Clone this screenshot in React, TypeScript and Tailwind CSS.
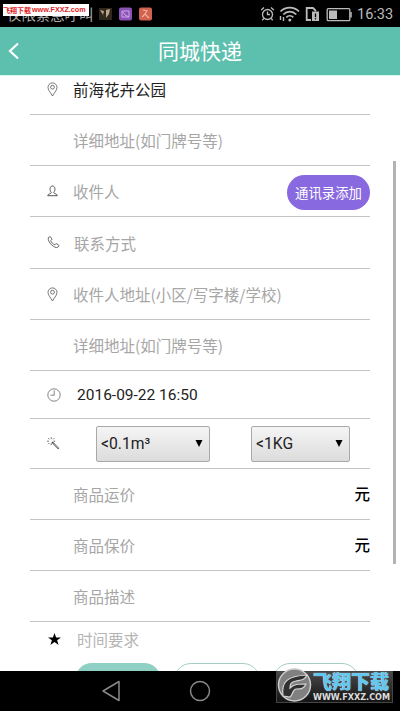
import React from 'react';

const PinIcon = () => (
  <svg width="11" height="15" viewBox="0 0 11 15" fill="none" stroke="#555" strokeWidth="0.8">
    <path d="M5.5 14C4.3 11.3 1 8.6 1 5.4a4.5 4.5 0 0 1 9 0C10 8.6 6.7 11.3 5.5 14Z" />
    <circle cx="5.5" cy="5.2" r="1.9" />
  </svg>
);

const PersonIcon = () => (
  <svg width="11" height="12" viewBox="0 0 11 12" fill="none" stroke="#444" strokeWidth="0.9">
    <path d="M4.3 7.4C2.3 5.4 2.7 1 5.5 1s3.200 4.400 1.200 6.400c0 1.500 3.400 1.200 3.600 3.300H.7c.2-2.100 3.600-1.800 3.600-3.300Z" />
  </svg>
);

const PhoneIcon = () => (
  <svg width="13" height="13" viewBox="0 0 13 13" fill="none" stroke="#555" strokeWidth="0.9">
    <path d="M1.300 1.600 2.500.8c.5-.3.9-.2 1.200.3l1 1.700c.3.5.1.9-.3 1.200l-.7.6c.5 1.700 2.400 3.600 4.100 4.200l.7-.8c.3-.4.700-.5 1.200-.2l1.800 1.100c.5.300.5.700.2 1.100l-1 1.300C7.800 12.800.4 6.500 1.300 1.600Z" />
  </svg>
);

const ClockIcon = () => (
  <svg width="14" height="14" viewBox="0 0 14 14" fill="none" stroke="#666" strokeWidth="0.8">
    <circle cx="7" cy="7" r="6.200" />
    <path d="M7.200 2.500v4.700H3.500" />
  </svg>
);

const WandIcon = () => (
  <svg width="13" height="13" viewBox="0 0 13 13" fill="none" stroke="#444">
    <path d="m5 5 6.700 6.700" strokeWidth="1.600" />
    <path d="m6.500 6.500 4.700 4.700" stroke="#ddd" strokeWidth="0.600" />
    <path d="M4.200.3v1.600M.2 4.200h1.600M1.300 1.300l1 1M7.100 1.300l-1 1M1.300 7.100l1-1M4.200 6.400V8M6.600 4.200h1.500" strokeWidth="0.900" />
  </svg>
);

const StatusIcons = () => (
  <svg width="93" height="18" viewBox="0 0 93 18" fill="none" stroke="#bbb" strokeWidth="1.300">
    {/* alarm */}
    <circle cx="7.500" cy="9.500" r="5" />
    <path d="M7.500 6.500v3H10M1.200 5 4 2.500M13.800 5 11 2.500M3.800 13.500l-1.500 1.700M11.200 13.500l1.500 1.700" />
    {/* wifi */}
    <path d="M20.500 6.500a13 13 0 0 1 18.500 0M23.300 9.500a9 9 0 0 1 13 0M26.300 12.400a5 5 0 0 1 7 0" strokeWidth="1.700" />
    <circle cx="29.800" cy="15" r="1.500" fill="#bbb" stroke="none" />
    <path d="M20.500 11v4M23.500 12v4" strokeWidth="1.400" />
    {/* sim card */}
    <path d="M51 15h-4.300V3H53l3 3" strokeWidth="1.800" />
    <path d="M52 6.500h7v9.500h-7z" fill="#bbb" stroke="none" />
    <path d="M55.500 8.500v3.700M55.500 13.200v1.300" stroke="#000" />
    {/* battery */}
    <rect x="67.200" y="3.700" width="22.600" height="12" rx="1" />
    <path d="M69 5.500h8v8.500h-8z" fill="#bbb" stroke="none" />
    <path d="M91 7v5.500" strokeWidth="1.500" />
  </svg>
);

const StatusBar = () => (
  <div className="relative h-[27px] bg-black flex items-center pl-[7px] pr-[7px] shrink-0">
    <span className="w-[86px] text-[14.400px] leading-[27px] text-[#aaa] whitespace-nowrap">仅限紧急呼叫</span>
    <svg className="ml-[5px]" width="54" height="14" viewBox="0 0 54 14">
      <rect x="1" y="1" width="13" height="12" fill="#30271d" />
      <path d="m2 3 4 1-1 4 2 3M8 3l4-1-1 5-3 4" fill="#b9a58b" />
      <rect x="21" y="0.500" width="13" height="13" rx="2" fill="#8b52b7" />
      <path d="M24 4h7v6h-7zM25 5l2 3 4 2" fill="none" stroke="#d0a7e5" />
      <rect x="41" y="0.500" width="13" height="13" rx="2" fill="#cf6250" />
      <path d="m44 10 3-3 4 4M45 3l4 1-2 3" fill="none" stroke="#f6b19e" strokeWidth="1.200" />
    </svg>
    <span className="ml-auto flex items-center">
      <StatusIcons />
      <span className="ml-[4px] mt-[1px] w-[36px] font-[Roboto,sans-serif] text-[14.500px] leading-[27px] text-[#bbb] whitespace-nowrap">16:33</span>
    </span>
    <div className="absolute left-[3px] top-[4px] w-[86px] h-[12px] bg-white flex items-center text-[#e01c24] font-bold whitespace-nowrap">
      <span className="w-[29px] text-[7px] leading-[12px]">飞翔下载</span>
      <span className="font-[Liberation_Sans,sans-serif] text-[7.200px] leading-[12px]">www.FXXZ.com</span>
    </div>
  </div>
);

type RowProps = {
  icon?: React.ReactNode;
  height?: string;
  children: React.ReactNode;
};

const Row = ({ icon, height = 'h-[51px]', children }: RowProps) => (
  <div className={`flex items-center shrink-0 border-b border-[#c4c4c4] ${height}`}>
    <div className="w-[43px] shrink-0 pl-[17px]">{icon}</div>
    {children}
  </div>
);

const Placeholder = ({ text }: { text: string }) => (
  <span className="text-[#a6a6a6] whitespace-nowrap">{text}</span>
);

const Select = ({ label, className }: { label: string; className: string }) => (
  <div className={`h-[36px] flex items-center justify-between pl-[4px] pr-[6px] border border-[#a9a9a9] rounded-[2px] bg-linear-to-b from-[#f5f5f5] to-[#dcdcdc] font-[Roboto,sans-serif] text-[15.700px] text-[#222] ${className}`}>
    <span>{label}</span>
    <svg width="8" height="7" viewBox="0 0 8 7"><path d="M0.500 0h7L4 7Z" fill="#000" /></svg>
  </div>
);

const Watermark = () => (
  <div className="absolute left-[276px] top-0 w-[117px] h-[32px] flex items-center border border-[#444] bg-linear-to-b from-[#4a4a4a] to-[#151515]">
    <svg className="shrink-0 -mt-[5px]" width="35" height="34" viewBox="0 0 35 34">
      <circle cx="17.500" cy="17" r="16" fill="#808080" stroke="#ccc" strokeWidth="1.500" />
      <path d="M6 28C4 14 10 8 30 7c-2 5-6 5-11 6-5 1-6 3-6 7 4-4 8-4 16-4-2 5-5 5-10 5-4 1-3 6-6 8Z" fill="#303030" stroke="#d5d5d5" strokeWidth="1.200" />
    </svg>
    <div className="flex flex-col ml-[1px] whitespace-nowrap">
      <span className="text-[19px] leading-[20px] -mt-[2px] font-black text-[#62c7ef] [text-shadow:0_0_1px_#fff]">飞翔下载</span>
      <svg className="mt-[1px]" width="78" height="9" viewBox="0 0 78 9">
        <text x="0" y="8" textLength="77" lengthAdjust="spacingAndGlyphs" fontFamily="DejaVu Sans" fontWeight="bold" fontSize="8" fill="#ddd">WWW.FXXZ.COM</text>
      </svg>
    </div>
  </div>
);

const NavBar = () => (
  <div className="relative h-[40px] bg-black shrink-0 flex items-center pl-[101px]">
    <svg width="20" height="22" viewBox="0 0 20 22" fill="none" stroke="#888" strokeWidth="1.500" strokeLinejoin="round">
      <path d="M18 1.500v19L2 11Z" />
    </svg>
    <svg className="ml-[68px]" width="22" height="22" viewBox="0 0 22 22" fill="none" stroke="#888" strokeWidth="1.500">
      <circle cx="11" cy="11" r="9.500" />
    </svg>
    <Watermark />
  </div>
);

const App = () => (
  <div className="relative w-[400px] h-[711px] flex flex-col overflow-hidden bg-white font-['Noto_Sans_CJK_SC',sans-serif] text-[15.500px] leading-[24px]">
    <StatusBar />
    <header className="h-[48px] shrink-0 bg-[#5dbfae] flex items-center pl-[8px] text-white">
      <svg width="12" height="18" viewBox="0 0 12 18" fill="none" stroke="#fff" strokeWidth="2.200">
        <path d="M10 1.500 2 9l8 7.500" />
      </svg>
      <h1 className="flex-1 text-center text-[21px] leading-[46px] pr-[20px] pb-[2px]">同城快递</h1>
    </header>

    <main className="flex-1 min-h-0 overflow-hidden px-[30px] border-t border-[#d5f8f2]">
      <div className="flex flex-col -mt-[12px]">
        <Row icon={<PinIcon />}><span className="text-[#222]">前海花卉公园</span></Row>
        <Row><Placeholder text="详细地址(如门牌号等)" /></Row>
        <Row icon={<PersonIcon />}>
          <Placeholder text="收件人" />
          <span className="ml-auto mt-[3px] w-[83px] h-[35px] rounded-full bg-[#8869e0] text-white text-[13.400px] leading-[35px] text-center">通讯录添加</span>
        </Row>
        <Row icon={<PhoneIcon />} height="h-[52px]">
          <span className="pl-[1px]"><Placeholder text="联系方式" /></span>
        </Row>
        <Row icon={<PinIcon />}><Placeholder text="收件人地址(小区/写字楼/学校)" /></Row>
        <Row><Placeholder text="详细地址(如门牌号等)" /></Row>
        <Row icon={<ClockIcon />} height="h-[48px]">
          <span className="pl-[4px] font-[Roboto,sans-serif] text-[15.500px] text-[#222]">2016-09-22 16:50</span>
        </Row>
        <Row icon={<WandIcon />} height="h-[50px]">
          <Select label="<0.1m³" className="ml-[23px] w-[114px]" />
          <Select label="<1KG" className="ml-[41px] w-[99px]" />
        </Row>
        <Row><Placeholder text="商品运价" /><span className="ml-auto -mt-[2px] text-black font-medium">元</span></Row>
        <Row><Placeholder text="商品保价" /><span className="ml-auto -mt-[2px] text-black font-medium">元</span></Row>
        <Row><Placeholder text="商品描述" /></Row>
        <div className="flex items-center h-[34px] pl-[18px]">
          <svg width="13" height="12" viewBox="0 0 13 12">
            <path d="m6.500 0 1.600 4.500H13L9.100 7.300l1.500 4.700-4.100-2.900L2.400 12l1.500-4.700L0 4.500h4.900Z" fill="#000" />
          </svg>
          <span className="ml-[16px] text-[#b5b5b5]">时间要求</span>
        </div>
        <div className="flex gap-[13px] pl-[45px] mt-[7px]">
          <span className="w-[86px] h-[34px] rounded-full bg-[#8fd0c5]" />
          <span className="w-[86px] h-[34px] rounded-full border border-[#a5cfc6]" />
          <span className="w-[86px] h-[34px] rounded-full border border-[#a5cfc6]" />
        </div>
      </div>
    </main>

    <div className="absolute left-[393px] top-[161px] w-[3px] h-[403px] bg-[#b3b3b3]" />
    <NavBar />
  </div>
);

export default App;
